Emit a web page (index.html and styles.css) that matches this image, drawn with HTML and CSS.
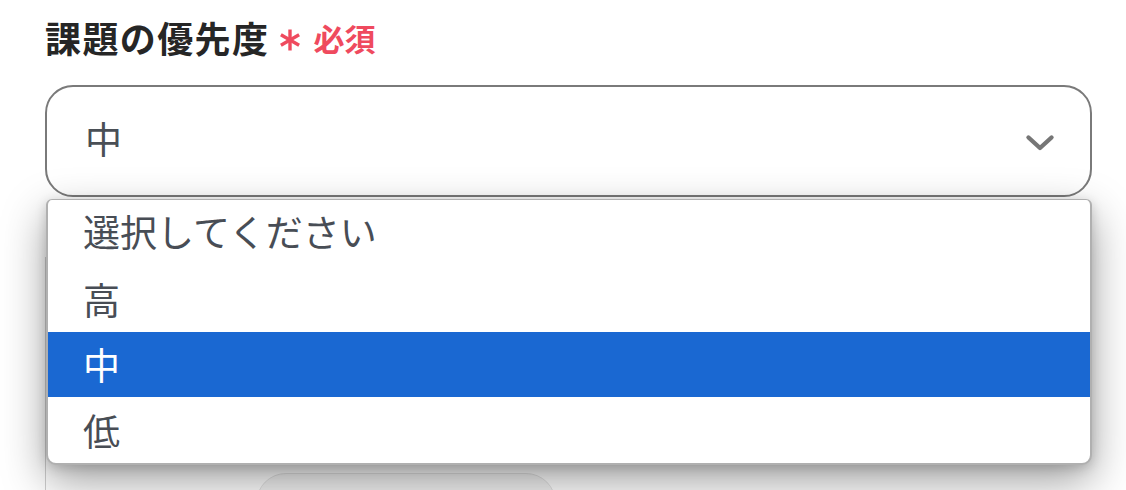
FILE: index.html
```html
<!DOCTYPE html>
<html lang="ja">
<head>
<meta charset="utf-8">
<link rel="stylesheet" href="styles.css">
</head>
<body>
<div class="field">
  <div class="label-row">
    <span class="label">課題の優先度</span>
    <svg class="asterisk" viewBox="0 0 22 22" width="22" height="22" aria-hidden="true">
      <g stroke="#ef4a5e" stroke-width="3.4" stroke-linecap="butt">
        <line x1="11" y1="0.5" x2="11" y2="21.5"/>
        <line x1="1.9" y1="5.75" x2="20.1" y2="16.25"/>
        <line x1="1.9" y1="16.25" x2="20.1" y2="5.75"/>
      </g>
    </svg>
    <span class="required">必須</span>
  </div>
  <div class="select-wrap">
    <div class="select">
      <span class="value">中</span>
      <svg class="chevron" viewBox="0 0 30 18" width="30" height="18" aria-hidden="true">
        <polyline points="3.5,3.5 15,14 26.5,3.5" fill="none" stroke="#767676" stroke-width="4.4" stroke-linecap="round" stroke-linejoin="round"/>
      </svg>
    </div>
    <ul class="dropdown">
      <li class="option">選択してください</li>
      <li class="option">高</li>
      <li class="option selected">中</li>
      <li class="option">低</li>
    </ul>
  </div>
  <div class="panel">
    <div class="divider"></div>
    <div class="pill"></div>
  </div>
</div>
</body>
</html>
```

FILE: styles.css
```css
* { box-sizing: border-box; }
html, body {
  margin: 0;
  padding: 0;
  background: #ffffff;
  overflow: hidden;
}
body {
  width: 1126px;
  height: 490px;
  font-family: "Noto Sans CJK JP", "Noto Sans", sans-serif;
  color: #2a2a2a;
}
.field {
  padding: 12px 34px 0 45px;
}
.label-row {
  display: flex;
  align-items: center;
  height: 50px;
}
.label {
  font-size: 36px;
  font-weight: 700;
  letter-spacing: 1.4px;
  color: #262626;
  line-height: 50px;
}
.asterisk {
  margin-left: 10px;
  margin-top: 5px;
}
.required {
  margin-left: 12px;
  font-size: 31px;
  font-weight: 700;
  color: #ef4a5e;
  line-height: 50px;
  margin-top: 2px;
}
.select-wrap {
  position: relative;
  margin-top: 23px;
}
.select {
  height: 112px;
  border: 2px solid #7a7a7a;
  border-radius: 28px;
  display: flex;
  align-items: center;
  justify-content: space-between;
  padding: 0 35px 0 38px;
  background: #fff;
}
.value {
  font-size: 37px;
  color: #4a4f56;
  line-height: 1;
  margin-top: -6px;
}
.chevron {
  margin-top: 4px;
}
.dropdown {
  position: absolute;
  z-index: 5;
  top: 114px;
  left: 1px;
  right: 0;
  margin: 0;
  padding: 0;
  list-style: none;
  background: #fff;
  border: 2px solid #b0b0b0;
  border-top-width: 1.5px;
  border-radius: 6px 6px 10px 10px;
  overflow: hidden;
  box-shadow: 0 16px 44px rgba(0, 0, 0, 0.38), 0 3px 12px rgba(0, 0, 0, 0.16);
}
.option {
  height: 66px;
  display: flex;
  align-items: center;
  padding-left: 35px;
  font-size: 37px;
  color: #484d55;
  line-height: 1;
}
.option:first-child {
  height: 66px;
  padding-bottom: 4px;
}
.option.selected {
  background: #1a68d2;
  color: #ffffff;
  height: 65px;
}
.panel {
  position: relative;
  margin-top: 60px;
  height: 233px;
  overflow: hidden;
  border-left: 1.5px solid #cfcfcf;
}
.divider {
  position: absolute;
  top: 100px;
  left: 0;
  right: 0;
  border-top: 2px solid #c9ccd2;
}
.pill {
  position: absolute;
  top: 216px;
  left: 210px;
  width: 300px;
  height: 60px;
  border-radius: 30px;
  background: #f3f3f3;
  border: 1px solid #e2e2e2;
}
```
